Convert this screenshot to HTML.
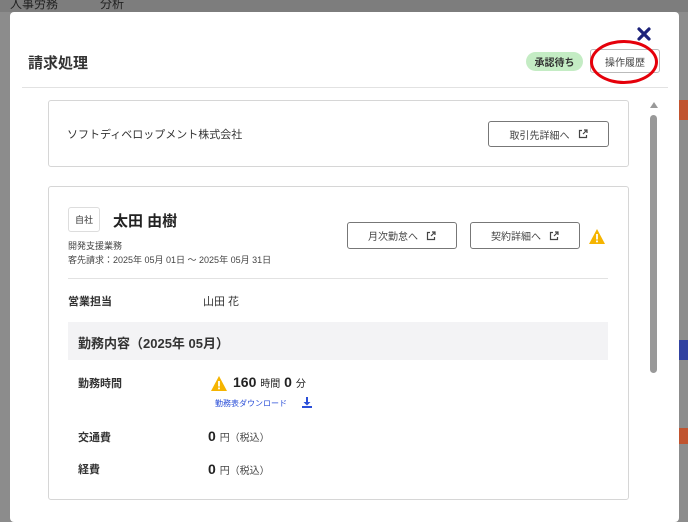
<!DOCTYPE html>
<html><head><meta charset="utf-8"><style>
*{margin:0;padding:0;box-sizing:border-box}
body{width:688px;height:510px;overflow:hidden;background:#8c8c8c;font-family:"Liberation Sans","Noto Sans CJK JP",sans-serif;color:#333;position:relative}
.a{position:absolute}
.modal{left:10px;top:12px;width:669px;height:510px;background:#fff;border-radius:4px}
.card{background:#fff;border:1px solid #d6d6d6;border-radius:3px}
.btn{border:1px solid #777;border-radius:3px;font-size:10px;color:#444;display:flex;align-items:center;justify-content:center;gap:8px;background:#fff}
.lbl{font-size:11px;font-weight:bold;color:#333}
</style></head><body>
<div class="a" style="left:0;top:0;width:688px;height:12px;background:#7d7d7d"></div>
<div class="a" style="left:10px;top:-5px;font-size:12px;color:#222">人事労務</div>
<div class="a" style="left:100px;top:-5px;font-size:12px;color:#222">分析</div>
<div class="a" style="left:679px;top:100px;width:9px;height:20px;background:#c0542f"></div>
<div class="a" style="left:679px;top:340px;width:9px;height:20px;background:#3142a0"></div>
<div class="a" style="left:679px;top:428px;width:9px;height:16px;background:#c0542f"></div>
<div class="a modal"></div>
<svg class="a" style="left:637px;top:27px" width="14" height="14" viewBox="0 0 14 14"><path d="M2 2L12 12M12 2L2 12" stroke="#1d237a" stroke-width="3.2" stroke-linecap="round"/></svg>
<div class="a" style="left:28px;top:52px;font-size:15px;font-weight:bold;color:#333">請求処理</div>
<div class="a" style="left:526px;top:52px;width:57px;height:19px;background:#c4ecc4;border-radius:10px;font-size:10px;font-weight:bold;color:#333;display:flex;align-items:center;justify-content:center">承認待ち</div>
<div class="a" style="left:590px;top:49px;width:70px;height:24px;border:1px solid #bbb;border-radius:3px;font-size:10px;color:#444;display:flex;align-items:center;justify-content:center">操作履歴</div>
<div class="a" style="left:590px;top:40px;width:68px;height:44px;border:3px solid #e5000a;border-radius:50%"></div>
<div class="a" style="left:22px;top:87px;width:646px;height:1px;background:#e2e2e2"></div>
<div class="a" style="left:650px;top:102px;width:0;height:0;border-left:4px solid transparent;border-right:4px solid transparent;border-bottom:6px solid #999"></div>
<div class="a" style="left:650px;top:115px;width:7px;height:258px;background:#999;border-radius:4px"></div>
<div class="a card" style="left:48px;top:100px;width:581px;height:67px"></div>
<div class="a" style="left:67px;top:126px;font-size:11px;color:#333">ソフトディベロップメント株式会社</div>
<div class="a btn" style="left:488px;top:121px;width:121px;height:26px">取引先詳細へ <svg width="10" height="10" viewBox="0 0 10 10"><path d="M4 1.5H1.5v7h7V6M5 5l4-4M6 1h3v3" fill="none" stroke="#444" stroke-width="1.2"/></svg></div>
<div class="a card" style="left:48px;top:186px;width:581px;height:314px"></div>
<div class="a" style="left:68px;top:207px;width:32px;height:25px;border:1px solid #ddd;border-radius:3px;font-size:9px;display:flex;align-items:center;justify-content:center">自社</div>
<div class="a" style="left:113px;top:210px;font-size:15px;font-weight:bold;color:#222">太田 由樹</div>
<div class="a" style="left:68px;top:239px;font-size:9px;color:#444">開発支援業務</div>
<div class="a" style="left:68px;top:253px;font-size:9px;color:#444">客先請求：2025年 05月 01日 ～ 2025年 05月 31日</div>
<div class="a btn" style="left:347px;top:222px;width:110px;height:27px">月次勤怠へ <svg width="10" height="10" viewBox="0 0 10 10"><path d="M4 1.5H1.5v7h7V6M5 5l4-4M6 1h3v3" fill="none" stroke="#444" stroke-width="1.2"/></svg></div>
<div class="a btn" style="left:470px;top:222px;width:110px;height:27px">契約詳細へ <svg width="10" height="10" viewBox="0 0 10 10"><path d="M4 1.5H1.5v7h7V6M5 5l4-4M6 1h3v3" fill="none" stroke="#444" stroke-width="1.2"/></svg></div>
<svg class="a" style="left:588px;top:228px" width="18" height="17" viewBox="0 0 18 17"><path d="M9 1L17 16H1Z" fill="#f5b400"/><rect x="8.1" y="6" width="1.8" height="5.5" fill="#fff"/><rect x="8.1" y="12.5" width="1.8" height="1.8" fill="#fff"/></svg>
<div class="a" style="left:68px;top:278px;width:540px;height:1px;background:#e2e2e2"></div>
<div class="a lbl" style="left:68px;top:293px">営業担当</div>
<div class="a" style="left:203px;top:293px;font-size:11px">山田 花</div>
<div class="a" style="left:68px;top:322px;width:540px;height:38px;background:#f3f3f5"></div>
<div class="a" style="left:78px;top:333px;font-size:13px;font-weight:bold;color:#333">勤務内容（2025年 05月）</div>
<div class="a lbl" style="left:78px;top:375px">勤務時間</div>
<svg class="a" style="left:210px;top:375px" width="18" height="17" viewBox="0 0 18 17"><path d="M9 1L17 16H1Z" fill="#f5b400"/><rect x="8.1" y="6" width="1.8" height="5.5" fill="#fff"/><rect x="8.1" y="12.5" width="1.8" height="1.8" fill="#fff"/></svg>
<div class="a" style="left:233px;top:374px;font-size:14px;font-weight:bold;color:#222">160 <span style="font-size:10px;font-weight:normal">時間</span> 0 <span style="font-size:10px;font-weight:normal">分</span></div>
<div class="a" style="left:215px;top:398px;font-size:8px;color:#2b4fd8">勤務表ダウンロード</div>
<svg class="a" style="left:302px;top:397px" width="10" height="11" viewBox="0 0 10 11"><path d="M4 0h2v5h2.5L5 8.5 1.5 5H4z" fill="#2b4fd8"/><rect x="0" y="9" width="10" height="2" fill="#2b4fd8"/></svg>
<div class="a lbl" style="left:78px;top:429px">交通費</div>
<div class="a" style="left:208px;top:428px;font-size:14px;font-weight:bold;color:#222">0 <span style="font-size:10px;font-weight:normal;color:#444">円（税込）</span></div>
<div class="a lbl" style="left:78px;top:461px">経費</div>
<div class="a" style="left:208px;top:461px;font-size:14px;font-weight:bold;color:#222">0 <span style="font-size:10px;font-weight:normal;color:#444">円（税込）</span></div>
</body></html>
